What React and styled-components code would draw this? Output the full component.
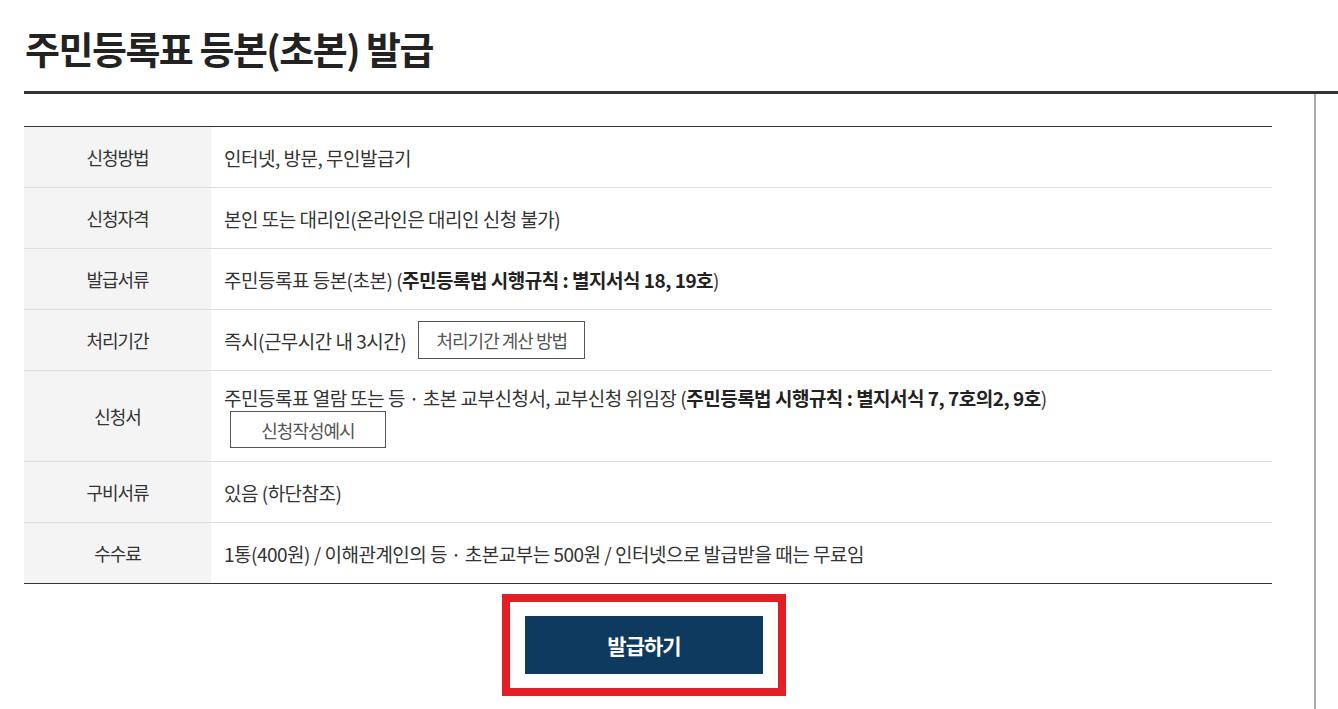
import React from "react";
import styled, { createGlobalStyle } from "styled-components";

const GlobalStyle = createGlobalStyle`
  html, body {
    margin: 0;
    padding: 0;
    background: #fff;
    overflow: hidden;
  }
  body {
    font-family: "Noto Sans CJK KR", "Noto Sans", sans-serif;
    color: #333;
  }
`;

const Page = styled.div`
  padding-left: 24px;
  height: 709px;
  display: flex;
  flex-direction: column;
`;

const Title = styled.h1`
  margin: 0;
  padding: 20px 0 15px 1px;
  font-size: 38px;
  font-weight: 700;
  letter-spacing: -1.5px;
  line-height: 56px;
  color: #222;
  border-bottom: 3px solid #333;
`;

const Body = styled.div`
  flex: 1;
  display: flex;
`;

const Content = styled.div`
  width: 1248px;
  padding-top: 32px;
  padding-right: 42px;
  border-right: 2px solid #aaa;
`;

const Table = styled.div`
  border-top: 1px solid #333;
  border-bottom: 1px solid #333;
`;

const Row = styled.div`
  display: grid;
  grid-template-columns: 187px 1fr;
  min-height: ${(p) => p.$h || 60}px;
  & + & {
    border-top: 1px solid #ddd;
  }
`;

const Label = styled.div`
  background: #f4f4f4;
  display: flex;
  align-items: center;
  justify-content: center;
  font-size: 18px;
  letter-spacing: -1px;
  color: #333;
`;

const Cell = styled.div`
  padding: ${(p) => (p.$top ? "13px 13px 10px" : "0 13px")};
  display: flex;
  flex-direction: ${(p) => (p.$top ? "column" : "row")};
  align-items: ${(p) => (p.$top ? "flex-start" : "center")};
  gap: ${(p) => (p.$top ? "0" : "12px")};
  font-size: 19px;
  letter-spacing: -0.5px;
  color: #333;
  b {
    font-weight: 700;
    color: #222;
  }
`;

const LineButton = styled.button`
  font-family: inherit;
  background: #fff;
  border: 1px solid #555;
  color: #555;
  font-size: 18px;
  letter-spacing: -1px;
  height: ${(p) => p.$h || 38}px;
  width: ${(p) => p.$w}px;
  padding: 0;
  margin-left: ${(p) => p.$ml || 0}px;
  cursor: pointer;
`;

const Actions = styled.div`
  display: flex;
  justify-content: center;
  padding-top: 10px;
`;

const Highlight = styled.div`
  margin-right: 8px;
  border: 8px solid #e31e24;
  padding: 14px 15px;
`;

const IssueButton = styled.button`
  display: block;
  font-family: inherit;
  width: 238px;
  height: 58px;
  background: #0f3a5f;
  border: none;
  color: #fff;
  font-size: 21px;
  font-weight: 700;
  letter-spacing: -1px;
  cursor: pointer;
`;

const rows = [
  { label: "신청방법", content: "인터넷, 방문, 무인발급기" },
  { label: "신청자격", content: "본인 또는 대리인(온라인은 대리인 신청 불가)" },
  {
    label: "발급서류",
    content: (
      <span>
        주민등록표 등본(초본) (<b>주민등록법 시행규칙 : 별지서식 18, 19호</b>)
      </span>
    ),
  },
  {
    label: "처리기간",
    content: (
      <>
        <span>즉시(근무시간 내 3시간)</span>
        <LineButton $w={167}>처리기간 계산 방법</LineButton>
      </>
    ),
  },
  {
    label: "신청서",
    h: 90,
    top: true,
    content: (
      <>
        <span>
          주민등록표 열람 또는 등 · 초본 교부신청서, 교부신청 위임장 (
          <b>주민등록법 시행규칙 : 별지서식 7, 7호의2, 9호</b>)
        </span>
        <LineButton $w={156} $h={37} $ml={6}>
          신청작성예시
        </LineButton>
      </>
    ),
  },
  { label: "구비서류", content: "있음 (하단참조)" },
  {
    label: "수수료",
    content: "1통(400원) / 이해관계인의 등 · 초본교부는 500원 / 인터넷으로 발급받을 때는 무료임",
  },
];

export default function App() {
  return (
    <>
      <GlobalStyle />
      <Page>
        <Title>주민등록표 등본(초본) 발급</Title>
        <Body>
          <Content>
            <Table>
              {rows.map((r) => (
                <Row key={r.label} $h={r.h}>
                  <Label>{r.label}</Label>
                  <Cell $top={r.top}>{r.content}</Cell>
                </Row>
              ))}
            </Table>
            <Actions>
              <Highlight>
                <IssueButton>발급하기</IssueButton>
              </Highlight>
            </Actions>
          </Content>
        </Body>
      </Page>
    </>
  );
}
